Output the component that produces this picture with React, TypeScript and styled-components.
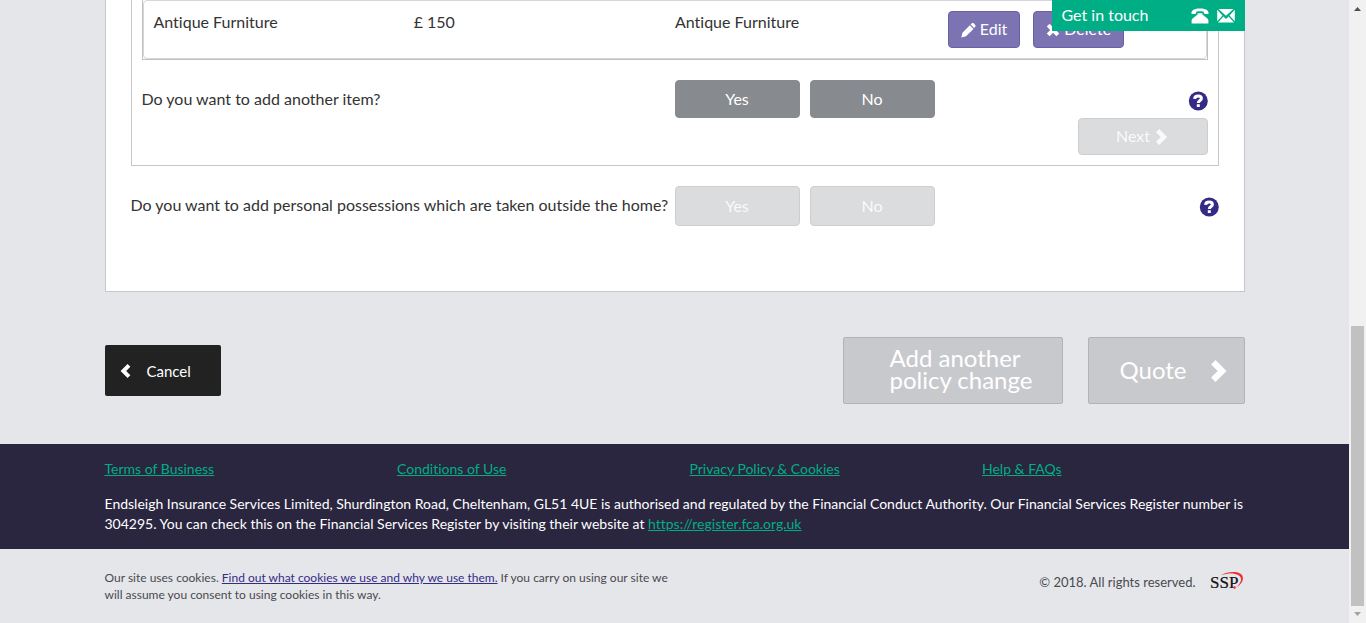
import React from "react";
import styled, { createGlobalStyle, css } from "styled-components";

const GlobalStyle = createGlobalStyle`
  *, *::before, *::after { box-sizing: border-box; }
  body {
    margin: 0;
    background: #e5e6ea;
    color: #333333;
    font-family: Lato, "Liberation Sans", sans-serif;
    font-size: 16px;
    font-variant-ligatures: none;
    line-height: 22px;
  }
  button { font: inherit; font-variant-ligatures: none; }
`;

const Shell = styled.div`
  display: flex;
  min-height: 100vh;
`;

const Page = styled.div`
  flex: 1;
  min-width: 0;
`;

const Container = styled.div`
  position: relative;
  max-width: 1170px;
  margin: 0 auto;
  padding: 0 15px;
`;

const Panel = styled.main`
  padding: 0 25px 65px;
  border: solid #c6c7cb;
  border-width: 0 1px 1px;
  background: #ffffff;
`;

const Section = styled.section`
  padding: 0 10px 10px;
  border: solid #c6c7cb;
  border-width: 0 1px 1px;
`;

const TableFrame = styled.div`
  border: solid #c0c1c4;
  border-width: 0 1px 1px;
`;

const ItemsTable = styled.table`
  width: 100%;
  height: 59px;
  table-layout: fixed;
  border: 1px solid #d6d6d8;
  border-radius: 4px;
  border-spacing: 0;
`;

const Cell = styled.td<{ $width?: string }>`
  width: ${(p) => p.$width ?? "auto"};
  padding: 10px;
  vertical-align: top;
  white-space: nowrap;
`;

const CellActions = styled.div`
  display: flex;
  gap: 13px;
`;

const Label = styled.span`
  padding-bottom: 2px;
`;

const ItemButton = styled.button`
  display: flex;
  align-items: center;
  gap: 4px;
  height: 37px;
  padding: 0 12px;
  border: 1px solid #695fa5;
  border-radius: 4px;
  background: #7c73b2;
  color: #ffffff;
`;

const Question = styled.div`
  display: flex;
  align-items: flex-start;
  padding-top: 20px;
`;

const QuestionText = styled.span`
  flex: 0 0 50%;
  padding-top: 8px;
  white-space: nowrap;
`;

const Choices = styled.div`
  display: flex;
  flex: 1;
  gap: 10px;
`;

const disabledLook = css`
  border: 1px solid #cdcecf;
  background: #dbdcde;
  color: #fafafb;
`;

const ChoiceButton = styled.button`
  width: 125px;
  height: 38px;
  padding: 0;
  border: 1px solid #878a8e;
  border-radius: 4px;
  background: #878a8e;
  color: #ffffff;

  &:disabled {
    height: 40px;
    ${disabledLook}
  }
`;

const HelpButton = styled.button`
  display: flex;
  margin-top: 11px;
  padding: 0;
  border: 0;
  background: none;
  color: #352b86;
`;

const NextRow = styled.div`
  display: flex;
  justify-content: flex-end;
`;

const NextButton = styled.button`
  display: flex;
  align-items: center;
  justify-content: center;
  gap: 3px;
  width: 130px;
  height: 37px;
  border-radius: 4px;
  ${disabledLook}
`;

const Contact = styled.aside`
  position: absolute;
  top: 0;
  right: 15px;
  display: flex;
  align-items: center;
  gap: 8px;
  width: 193px;
  height: 31px;
  padding: 0 10px;
  background: #00ae86;
  color: #ffffff;
`;

const ContactTitle = styled(Label)`
  flex: 1;
`;

const ContactLink = styled.a`
  display: flex;
  color: inherit;
`;

const Actions = styled.div`
  display: flex;
  align-items: center;
  gap: 25px;
  padding: 45px 0 40px;
`;

const CancelButton = styled.button`
  display: flex;
  align-items: center;
  gap: 14px;
  height: 51px;
  margin-right: auto;
  padding: 0 30px 0 14px;
  border: 0;
  border-radius: 2px;
  background: #222222;
  color: #ffffff;
  font-size: 15px;
`;

const BigButton = styled.button`
  display: flex;
  align-items: center;
  gap: 20px;
  height: 67px;
  padding: 0 15px 0 30px;
  border: 1px solid #b1b3b7;
  border-radius: 2px;
  background: #c8c9cd;
  color: #ffffff;
  font-size: 24px;
  line-height: 22px;
  text-align: left;
`;

const PolicyButton = styled(BigButton)`
  width: 220px;
  padding: 0 30px 4px 45px;
`;

const Legal = styled.footer`
  padding: 15px 0;
  background: #2a2640;
  color: #ffffff;
  font-size: 14px;
  line-height: 20px;
`;

const LegalLinks = styled.nav`
  display: grid;
  grid-template-columns: repeat(4, 1fr);
  gap: 30px;
  margin-bottom: 15px;
`;

const LegalLink = styled.a`
  color: #00ae86;
`;

const Paragraph = styled.p`
  margin: 0;
`;

const BottomBar = styled.div`
  display: flex;
  justify-content: space-between;
  padding: 20px 0;
  color: #4a4a4f;
`;

const CookieNote = styled.p`
  flex: 0 1 575px;
  margin: 0;
  font-size: 12px;
  line-height: 17px;
`;

const CookieLink = styled.a`
  color: #352b86;
`;

const Copyright = styled.div`
  display: flex;
  align-items: center;
  align-self: flex-start;
  gap: 14px;
  padding-top: 2px;
  font-size: 13px;
  line-height: 20px;
`;

const ScrollTrack = styled.div`
  display: flex;
  flex: 0 0 17px;
  flex-direction: column;
  align-items: center;
  background: #f1f1f1;
`;

const ScrollArrow = styled.svg`
  flex: none;
  width: 17px;
  height: 17px;
`;

const ScrollSpace = styled.div`
  flex: 309;
`;

const ScrollThumb = styled.div`
  flex: 280;
  width: 13px;
  background: #c1c1c1;
`;

const Chevron = ({ size, left }: { size: number; left?: boolean }) => (
  <svg width={size} height={size} viewBox="0 0 16 16" aria-hidden="true">
    <path
      fill="currentColor"
      transform={left ? "matrix(-1 0 0 1 16 0)" : undefined}
      d="M3 3.200 6.200 0l8 8-8 8L3 12.800 7.800 8z"
    />
  </svg>
);

const Pencil = () => (
  <svg width="15" height="16" viewBox="0 0 16 16" aria-hidden="true">
    <path
      fill="currentColor"
      d="M10.200 2 11.600.8c.7-.5 1.400-.4 1.900.1l1.700 1.800c.5.600.5 1.300 0 1.900L14 5.900zM9.400 2.800l3.900 4-7.700 7.600c-.3.300-.6.400-1 .5L.3 15.900l1-4.200c.1-.4.2-.7.500-1z"
    />
  </svg>
);

const Cross = () => (
  <svg width="14" height="14" viewBox="1 1 14 14" aria-hidden="true">
    <path
      fill="currentColor"
      d="M4.600 1.800 8 5.200l3.400-3.400 2.800 2.800L10.800 8l3.400 3.400-2.800 2.800L8 10.800l-3.400 3.400-2.800-2.800L5.200 8 1.800 4.600z"
    />
  </svg>
);

const Phone = () => (
  <svg width="18" height="16" viewBox="0 0 18 16" aria-hidden="true">
    <path
      fill="currentColor"
      d="M.4 4.900C.6 2 4 .5 9 .5s8.400 1.500 8.600 4.400c0 .8-.3 1.100-.9 1.100h-2.600c-.7 0-1.100-.4-1.200-1.100l-.2-1.200c-2.400-.5-5-.5-7.400 0l-.2 1.200C5 5.600 4.600 6 3.900 6H1.300C.7 6 .4 5.700.4 4.900zM6.600 5.200h4.800v1.300l5 4c.7.600 1 1.200 1 2V15.500H.6V12.500c0-.8.300-1.400 1-2l5-4z"
    />
  </svg>
);

const Envelope = () => (
  <svg width="18" height="16" viewBox="0 0 18 16" aria-hidden="true">
    <path fill="currentColor" d="M1.600 1h14.800L9 7.800zM.2 1.700 5.500 7.500.2 13.300zM17.800 1.700v11.600l-5.300-5.800zM6.400 8.600 9 11l2.600-2.400 5.400 6H1z" />
  </svg>
);

const QuestionMark = () => (
  <svg width="20" height="20" viewBox="0 0 20 20" aria-hidden="true">
    <circle cx="10.300" cy="10" r="9.500" fill="currentColor" />
    <path fill="none" stroke="#fff" strokeWidth="3" d="M6.600 7.900C6.700 5.700 8.200 4.900 10.200 4.900s3.200.9 3.200 2.500c0 2.100-3.100 2.100-3.100 4.700" />
    <path fill="#fff" d="M8.800 13.200h3v2.800h-3z" />
  </svg>
);

const SspLogo = () => (
  <svg width="35" height="22" viewBox="0 0 35 22" role="img" aria-label="SSP">
    <text x="0" y="17" fill="#111" stroke="#111" strokeWidth=".2" fontFamily="'Liberation Serif', serif" fontSize="17">
      SSP
    </text>
    <path fill="#ee2e31" d="M11 4.200C17 .8 25 .3 29.500 2.200c5.500 2.400 4.600 9.800-3.500 14.300 5.500-4.600 6.800-9.800 2.500-12.300C24.500 2 17.500 2.200 11 4.200z" />
    <circle cx="24.500" cy="16.500" r="1.300" fill="#ee2e31" />
  </svg>
);

const legalLinks = ["Terms of Business", "Conditions of Use", "Privacy Policy & Cookies", "Help & FAQs"];

export default function App() {
  return (
    <>
      <GlobalStyle />
      <Shell>
        <Page>
          <Container>
            <Panel>
              <Section>
                <TableFrame>
                  <ItemsTable aria-label="Specified items">
                    <tbody>
                      <tr>
                        <Cell $width="24.5%">Antique Furniture</Cell>
                        <Cell $width="24.6%">£ 150</Cell>
                        <Cell $width="25.7%">Antique Furniture</Cell>
                        <Cell>
                          <CellActions>
                            <ItemButton type="button"><Pencil /><Label>Edit</Label></ItemButton>
                            <ItemButton type="button"><Cross /><Label>Delete</Label></ItemButton>
                          </CellActions>
                        </Cell>
                      </tr>
                    </tbody>
                  </ItemsTable>
                </TableFrame>
                <Question role="group" aria-labelledby="another-item">
                  <QuestionText id="another-item">Do you want to add another item?</QuestionText>
                  <Choices>
                    <ChoiceButton type="button">Yes</ChoiceButton>
                    <ChoiceButton type="button">No</ChoiceButton>
                  </Choices>
                  <HelpButton type="button" aria-label="Help with adding another item"><QuestionMark /></HelpButton>
                </Question>
                <NextRow>
                  <NextButton type="button" disabled><Label>Next</Label><Chevron size={16} /></NextButton>
                </NextRow>
              </Section>
              <Question role="group" aria-labelledby="possessions">
                <QuestionText id="possessions">
                  Do you want to add personal possessions which are taken outside the home?
                </QuestionText>
                <Choices>
                  <ChoiceButton type="button" disabled>Yes</ChoiceButton>
                  <ChoiceButton type="button" disabled>No</ChoiceButton>
                </Choices>
                <HelpButton type="button" aria-label="Help with personal possessions"><QuestionMark /></HelpButton>
              </Question>
            </Panel>
            <Contact>
              <ContactTitle>Get in touch</ContactTitle>
              <ContactLink href="#phone" aria-label="Phone"><Phone /></ContactLink>
              <ContactLink href="#email" aria-label="Email"><Envelope /></ContactLink>
            </Contact>
            <Actions>
              <CancelButton type="button"><Chevron size={14} left />Cancel</CancelButton>
              <PolicyButton type="button">Add another policy change</PolicyButton>
              <BigButton type="button"><Label>Quote</Label><Chevron size={22} /></BigButton>
            </Actions>
          </Container>
          <Legal>
            <Container>
              <LegalLinks aria-label="Legal">
                {legalLinks.map((label) => (
                  <span key={label}><LegalLink href="#legal">{label}</LegalLink></span>
                ))}
              </LegalLinks>
              <Paragraph>
                Endsleigh Insurance Services Limited, Shurdington Road, Cheltenham, GL51 4UE is authorised and regulated by the
                Financial Conduct Authority. Our Financial Services Register number is 304295. You can check this on the
                Financial Services Register by visiting their website at{" "}
                <LegalLink href="https://register.fca.org.uk">https://register.fca.org.uk</LegalLink>
              </Paragraph>
            </Container>
          </Legal>
          <Container>
            <BottomBar>
              <CookieNote>
                Our site uses cookies. <CookieLink href="#cookies">Find out what cookies we use and why we use them.</CookieLink>{" "}
                If you carry on using our site we will assume you consent to using cookies in this way.
              </CookieNote>
              <Copyright>© 2018. All rights reserved.<SspLogo /></Copyright>
            </BottomBar>
          </Container>
        </Page>
        <ScrollTrack aria-hidden="true">
          <ScrollArrow viewBox="0 0 17 17"><path fill="#505050" d="M5 11h7L8.500 7z" /></ScrollArrow>
          <ScrollSpace />
          <ScrollThumb />
          <ScrollArrow viewBox="0 0 17 17"><path fill="#a3a3a3" d="M5 6h7l-3.500 4z" /></ScrollArrow>
        </ScrollTrack>
      </Shell>
    </>
  );
}
